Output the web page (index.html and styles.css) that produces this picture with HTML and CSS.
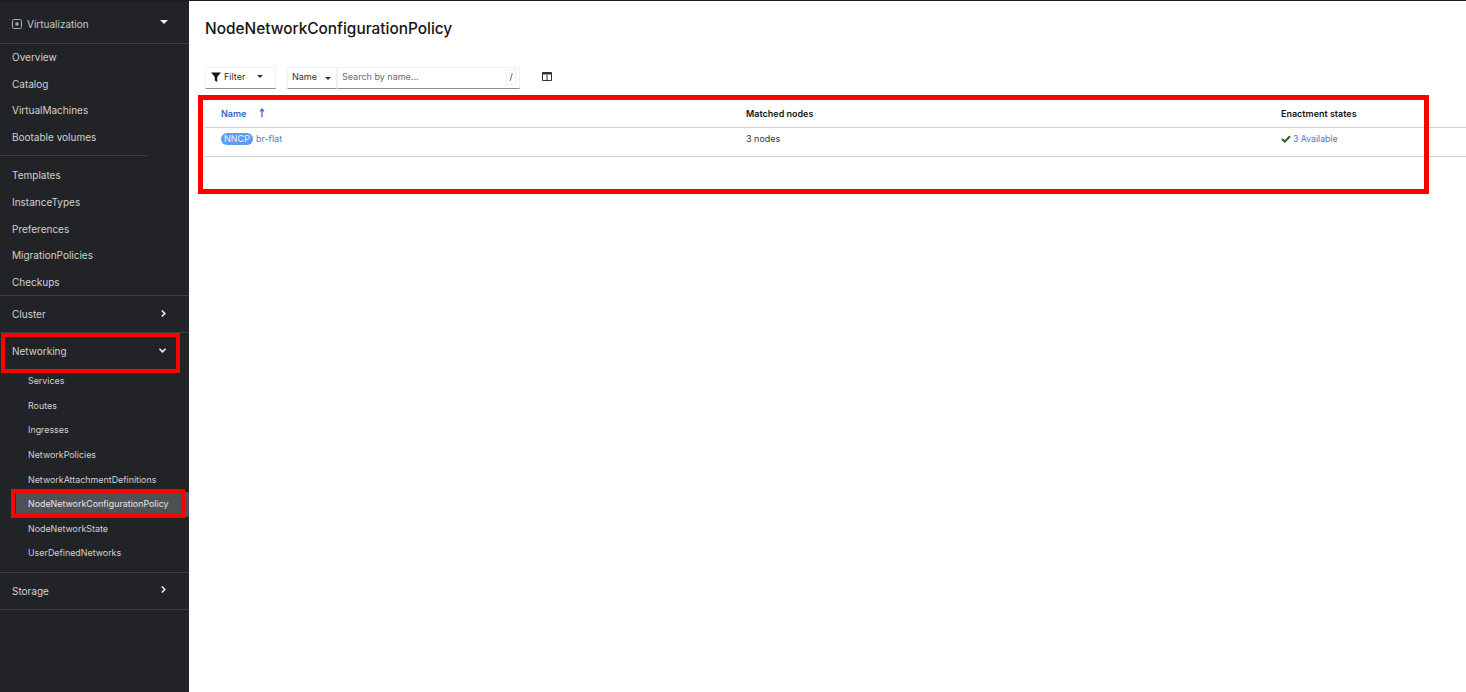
FILE: index.html
```html
<!DOCTYPE html>
<html lang="en">
<head>
    <meta charset="UTF-8">
    <title>NodeNetworkConfigurationPolicy</title>
    <link rel="stylesheet" href="styles.css">
</head>
<body>

    <!-- Sidebar -->
    <div class="sidebar">
        <div class="perspective">
            <svg class="perspective-icon" viewBox="0 0 10 10" width="10" height="10">
                <rect x="0.5" y="0.5" width="9" height="9" rx="1" fill="none" stroke="#a8abae" stroke-width="1"/>
                <rect x="3.5" y="3.5" width="3" height="3" fill="#a8abae"/>
            </svg>
            <span>Virtualization</span>
            <span class="caret-down"></span>
        </div>

        <div class="group">
            <a class="nav-item" href="#">Overview</a>
            <a class="nav-item" href="#">Catalog</a>
            <a class="nav-item" href="#">VirtualMachines</a>
            <a class="nav-item" href="#">Bootable volumes</a>
            <div class="separator"></div>
            <a class="nav-item" href="#">Templates</a>
            <a class="nav-item" href="#">InstanceTypes</a>
            <a class="nav-item" href="#">Preferences</a>
            <a class="nav-item" href="#">MigrationPolicies</a>
            <a class="nav-item" href="#">Checkups</a>
        </div>

        <div class="section">
            <span>Cluster</span>
            <svg class="chevron" viewBox="0 0 8 10" width="7" height="9"><path d="M2 1.5 L5.5 5 L2 8.5" fill="none" stroke="#f0f0f0" stroke-width="1.8"/></svg>
        </div>

        <div class="section section-open">
            <span>Networking</span>
            <svg class="chevron" viewBox="0 0 10 8" width="9" height="7"><path d="M1.5 2 L5 5.5 L8.5 2" fill="none" stroke="#f0f0f0" stroke-width="1.8"/></svg>
            <div class="mark mark-networking"></div>
        </div>
        <div class="subnav">
            <a class="sub-item" href="#">Services</a>
            <a class="sub-item" href="#">Routes</a>
            <a class="sub-item" href="#">Ingresses</a>
            <a class="sub-item" href="#">NetworkPolicies</a>
            <a class="sub-item" href="#">NetworkAttachmentDefinitions</a>
            <a class="sub-item active" href="#">NodeNetworkConfigurationPolicy<span class="mark mark-active"></span></a>
            <a class="sub-item" href="#">NodeNetworkState</a>
            <a class="sub-item" href="#">UserDefinedNetworks</a>
        </div>

        <div class="section section-last">
            <span>Storage</span>
            <svg class="chevron" viewBox="0 0 8 10" width="7" height="9"><path d="M2 1.5 L5.5 5 L2 8.5" fill="none" stroke="#f0f0f0" stroke-width="1.8"/></svg>
        </div>
    </div>

    <!-- Main -->
    <div class="content">
        <h1>NodeNetworkConfigurationPolicy</h1>

        <div class="toolbar">
            <div class="select filter-select">
                <svg viewBox="0 0 10 10" width="10" height="10"><path d="M0 0.5 H10 L6.2 5 V10 L3.8 8.5 V5 Z" fill="#151515"/></svg>
                <span>Filter</span>
                <span class="caret-small"></span>
            </div>
            <div class="select name-select">
                <span>Name</span>
                <span class="caret-small"></span>
            </div>
            <div class="search">
                <span class="placeholder">Search by name...</span>
                <span class="slash">/</span>
            </div>
            <svg class="columns-icon" viewBox="0 0 10 9" width="10" height="9">
                <path d="M0.5 0.5 H9.5 V8.5 H0.5 Z M5 2.5 V8.5" fill="none" stroke="#333" stroke-width="1"/>
                <path d="M0.5 0.5 H9.5 V2.5 H0.5 Z" fill="#333"/>
            </svg>
        </div>

        <div class="table">
            <div class="mark mark-table"></div>
            <div class="row head">
                <div class="cell col-name sorted">Name <svg viewBox="0 0 6 10" width="6" height="10"><path d="M3 9.5 V1.5 M1 3.5 L3 1 L5 3.5" fill="none" stroke="#3e5fc9" stroke-width="1.2"/></svg></div>
                <div class="cell col-nodes">Matched nodes</div>
                <div class="cell col-states">Enactment states</div>
            </div>
            <div class="row body-row">
                <div class="cell col-name"><span class="badge">NNCP</span> <a href="#">br-flat</a></div>
                <div class="cell col-nodes">3 nodes</div>
                <div class="cell col-states">
                    <svg viewBox="0 0 10 8" width="10" height="8"><path d="M1 4 L3.8 6.6 L9 1.2" fill="none" stroke="#2f5c24" stroke-width="2"/></svg>
                    <a class="state-link" href="#">3 Available</a>
                </div>
            </div>
        </div>
    </div>

</body>
</html>
```

FILE: styles.css
```css
/* General Reset */
* {
    margin: 0;
    padding: 0;
    box-sizing: border-box;
}

body {
    font-family: Inter, "Open Sans", sans-serif;
    background: #fff;
    color: #151515;
    display: flex;
    height: 692px;
    overflow: hidden;
    border-top: 1px solid #1b1d21;
}

a {
    text-decoration: none;
}

/* Sidebar */
.sidebar {
    width: 189px;
    flex-shrink: 0;
    background: #212327;
    color: #d2d2d2;
    font-size: 10px;
}

.perspective {
    display: flex;
    align-items: center;
    height: 43px;
    padding: 3px 21px 0 12px;
    border-bottom: 1px solid #3c3f42;
    color: #c7c9cc;
}

.perspective-icon {
    margin-right: 5px;
}

.caret-down {
    margin-left: auto;
    margin-bottom: 3px;
    border-left: 4px solid transparent;
    border-right: 4px solid transparent;
    border-top: 4px solid #f0f0f0;
}

.group {
    border-bottom: 1px solid #3c3f42;
}

.nav-item {
    display: block;
    height: 26.6px;
    line-height: 26.6px;
    padding-left: 12px;
    color: #d2d2d2;
}

.separator {
    height: 1px;
    margin: 5px 42px 6px 0;
    background: #3c3f42;
}

.section {
    position: relative;
    display: flex;
    align-items: center;
    justify-content: space-between;
    height: 37px;
    padding: 0 22px 0 12px;
    border-bottom: 1px solid #3c3f42;
    color: #d2d2d2;
}

.chevron {
    margin-bottom: 2px;
}

.section-open {
    border-bottom: none;
    height: 36px;
}

.subnav {
    padding: 0 0 6px;
    border-bottom: 1px solid #3c3f42;
}

.sub-item {
    position: relative;
    display: block;
    height: 24.55px;
    line-height: 24.55px;
    padding-left: 28px;
    font-size: 8.9px;
    color: #d2d2d2;
    white-space: nowrap;
}

.sub-item.active {
    background: #4f5255;
    margin-left: 16px;
    padding-left: 12px;
    color: #e6e6e6;
}

/* Red annotation boxes */
.mark {
    position: absolute;
    border: 4px solid #f00;
    pointer-events: none;
}

.mark-networking {
    left: 1px;
    top: 0;
    width: 179px;
    height: 40px;
}

.mark-active {
    left: -5px;
    top: -3px;
    width: 174px;
    height: 29px;
}

.mark-table {
    left: -7px;
    top: -3px;
    width: 1231px;
    height: 99px;
    border-width: 5px;
}

/* Main content */
.content {
    flex: 1;
    padding: 0 0 0 16px;
}

h1 {
    font-size: 15.4px;
    font-weight: 500;
    line-height: 20px;
    padding-top: 18px;
    height: 38px;
}

.toolbar {
    display: flex;
    align-items: center;
    margin-top: 28px;
    height: 22px;
    font-size: 9px;
}

.select {
    display: flex;
    align-items: center;
    height: 22px;
    padding-bottom: 3px;
    border: 1px solid #f0f0f0;
    border-bottom: 1px solid #8a8d90;
    color: #333;
}

.filter-select {
    width: 71px;
    padding-left: 5px;
    gap: 3px;
}

.filter-select .caret-small {
    margin-left: 9px;
}

.name-select {
    width: 50px;
    margin-left: 11px;
    padding-left: 4px;
    gap: 8px;
}

.name-select .caret-small {
    margin-top: 3px;
}

.caret-small {
    border-left: 3px solid transparent;
    border-right: 3px solid transparent;
    border-top: 3px solid #333;
}

.search {
    display: flex;
    align-items: center;
    justify-content: space-between;
    width: 183px;
    height: 22px;
    padding: 0 3px 3px 4px;
    border: 1px solid #f0f0f0;
    border-bottom: 1px solid #8a8d90;
    color: #6a6e73;
}

.slash {
    width: 10px;
    text-align: center;
    line-height: 14px;
    border: 1px solid #eee;
    color: #333;
}

.columns-icon {
    margin-left: 22px;
    margin-bottom: 3px;
}

/* Table */
.table {
    position: relative;
    font-size: 9px;
    margin-top: 9px;
}

.row {
    display: flex;
    border-bottom: 1px solid #d2d2d2;
}

.head {
    height: 30px;
    align-items: center;
    padding-top: 1px;
    font-weight: 600;
}

.body-row {
    height: 29px;
    padding-top: 3px;
    color: #333;
}

.body-row .cell {
    display: flex;
    align-items: center;
    height: 14px;
    gap: 3px;
}

.body-row .col-states {
    gap: 2px;
}

.body-row svg {
    margin-top: 1px;
}

.col-name {
    width: 541px;
    padding-left: 16px;
}

.col-nodes {
    width: 535px;
}

.sorted {
    color: #3e5fc9;
    display: flex;
    align-items: center;
    gap: 13px;
}

.cell a {
    color: #5a78c9;
}

.cell .state-link {
    font-size: 8.7px;
    margin-top: 1px;
    color: #4f72cc;
}

.badge {
    display: inline-block;
    background: #5b9cf0;
    color: #e8f1fd;
    border-radius: 8px;
    padding: 0 3px;
    line-height: 12px;
    margin-top: 2px;
}
```
